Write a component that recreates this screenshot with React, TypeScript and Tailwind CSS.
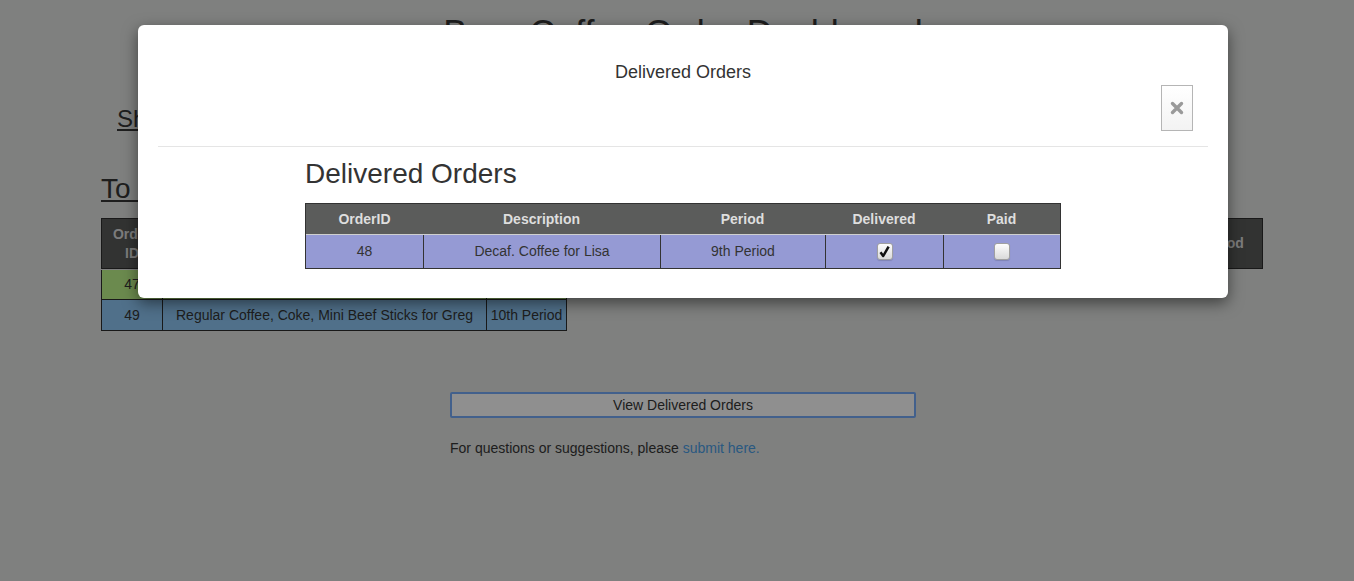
import React from "react";

const delivered = [
  { id: 48, desc: "Decaf. Coffee for Lisa", period: "9th Period", delivered: true, paid: false },
];

function Checkbox({ checked }: { checked: boolean }) {
  return (
    <span className="inline-flex h-[17px] w-[16px] items-center justify-center rounded-[3px] border border-[#a0a0a0] bg-gradient-to-b from-[#fdfdfd] to-[#dadada] shadow-[0_1px_1px_rgba(0,0,0,0.15)]">
      {checked && (
        <svg width="11" height="13" viewBox="0 0 11 13">
          <path d="M1.5 7.3 L4.2 11 L9.6 1.6" fill="none" stroke="#111" strokeWidth="2.5" strokeLinejoin="round" />
        </svg>
      )}
    </span>
  );
}

export default function App() {
  return (
    <div className="relative h-[581px] overflow-hidden bg-[#d4d5d4] font-['Liberation_Sans',Arial,sans-serif] text-[#333]">
      {/* page behind the modal */}
      <div className="pl-[12px]">
        <h1 className="pt-[14px] text-center text-[36px] leading-[40px]">Bear Coffee Order Dashboard</h1>
        <a className="ml-[105px] mt-[51px] block w-fit text-[24px] leading-[28px] underline">Show Menu</a>
        <h2 className="ml-[89px] mt-[40px] w-fit text-[28px] leading-[32px] underline">To Deliver</h2>

        <div className="ml-[89px] mt-[13px]">
          <div className="grid h-[51px] w-[1162px] grid-cols-[60px_1fr_80px] border border-[#2a2a2a] bg-[#545654] text-[14px] font-bold leading-[19px] text-[#cfcfcf]">
            <div className="flex items-center justify-center px-[6px] text-center">Order ID</div>
            <div className="flex items-center justify-center">Description</div>
            <div className="flex items-center justify-center">Period</div>
          </div>
          <div className="mt-px w-[466px] border-x border-b border-[#2a2a2a] text-[14px]">
            <div className="grid h-[30px] grid-cols-[60px_324px_80px] border-b border-[#2a2a2a] bg-[#b2e682]">
              <div className="flex items-center justify-center">47</div>
              <div className="flex items-center justify-center border-l border-[#2a2a2a]">Iced Tea for Mark</div>
              <div className="flex items-center justify-center border-l border-[#2a2a2a]">3rd Period</div>
            </div>
            <div className="grid h-[30px] grid-cols-[60px_324px_80px] bg-[#85bbe6]">
              <div className="flex items-center justify-center">49</div>
              <div className="flex items-center justify-center border-l border-[#2a2a2a]">
                Regular Coffee, Coke, Mini Beef Sticks for Greg
              </div>
              <div className="flex items-center justify-center border-l border-[#2a2a2a]">10th Period</div>
            </div>
          </div>
        </div>

        <div className="mx-auto mt-[61px] w-[466px]">
          <button className="h-[26px] w-full rounded-[2px] border-2 border-[#6ea0ea] bg-[#efefef] text-[14px] text-[#333]">
            View Delivered Orders
          </button>
          <p className="mt-[20px] text-[14px] leading-[20px] text-[#333]">
            For questions or suggestions, please <a className="text-[#4694d6]">submit here.</a>
          </p>
        </div>
      </div>

      {/* modal */}
      <div className="absolute inset-0 bg-black/40 pl-[12px] pt-[25px]">
        <div className="mx-auto w-[1090px] rounded-md bg-white shadow-[0_5px_15px_rgba(0,0,0,0.5)]">
          <div className="mx-5 border-b border-[#e5e5e5] px-[15px] pb-[15px] pt-[34px]">
            <h4 className="text-center text-[18px] leading-[26px] text-[#333]">Delivered Orders</h4>
            <div className="flex justify-end">
              <button className="flex h-[46px] w-[32px] items-center justify-center border border-[#b5b5b5] bg-gradient-to-b from-white to-[#f3f3f3]">
                <svg width="14" height="14" viewBox="0 0 14 14">
                  <path d="M2.5 2.5 L11.5 11.5 M11.5 2.5 L2.5 11.5" stroke="#9a9a9a" strokeWidth="3.4" strokeLinecap="round" />
                </svg>
              </button>
            </div>
          </div>

          <div className="pb-[29px] pt-[11px]">
            <div className="mx-auto w-[756px]">
              <h2 className="mb-[14px] text-[28px] leading-[31px] text-[#333]">Delivered Orders</h2>
              <div className="border border-[#333] text-[14px]">
                <div className="grid h-[31px] grid-cols-[117px_237px_165px_118px_117px] border-b border-[#cfcfcf] bg-[#5b5c5b] font-bold text-[#dedede]">
                  <div className="flex items-center justify-center">OrderID</div>
                  <div className="flex items-center justify-center">Description</div>
                  <div className="flex items-center justify-center">Period</div>
                  <div className="flex items-center justify-center">Delivered</div>
                  <div className="flex items-center justify-center">Paid</div>
                </div>
                {delivered.map((o) => (
                  <div key={o.id} className="grid h-[33px] grid-cols-[117px_237px_165px_118px_117px] bg-[#959ad4] text-[#333]">
                    <div className="flex items-center justify-center">{o.id}</div>
                    <div className="flex items-center justify-center border-l border-[#333]">{o.desc}</div>
                    <div className="flex items-center justify-center border-l border-[#333]">{o.period}</div>
                    <div className="flex items-center justify-center border-l border-[#333]">
                      <Checkbox checked={o.delivered} />
                    </div>
                    <div className="flex items-center justify-center border-l border-[#333]">
                      <Checkbox checked={o.paid} />
                    </div>
                  </div>
                ))}
              </div>
            </div>
          </div>
        </div>
      </div>
    </div>
  );
}
